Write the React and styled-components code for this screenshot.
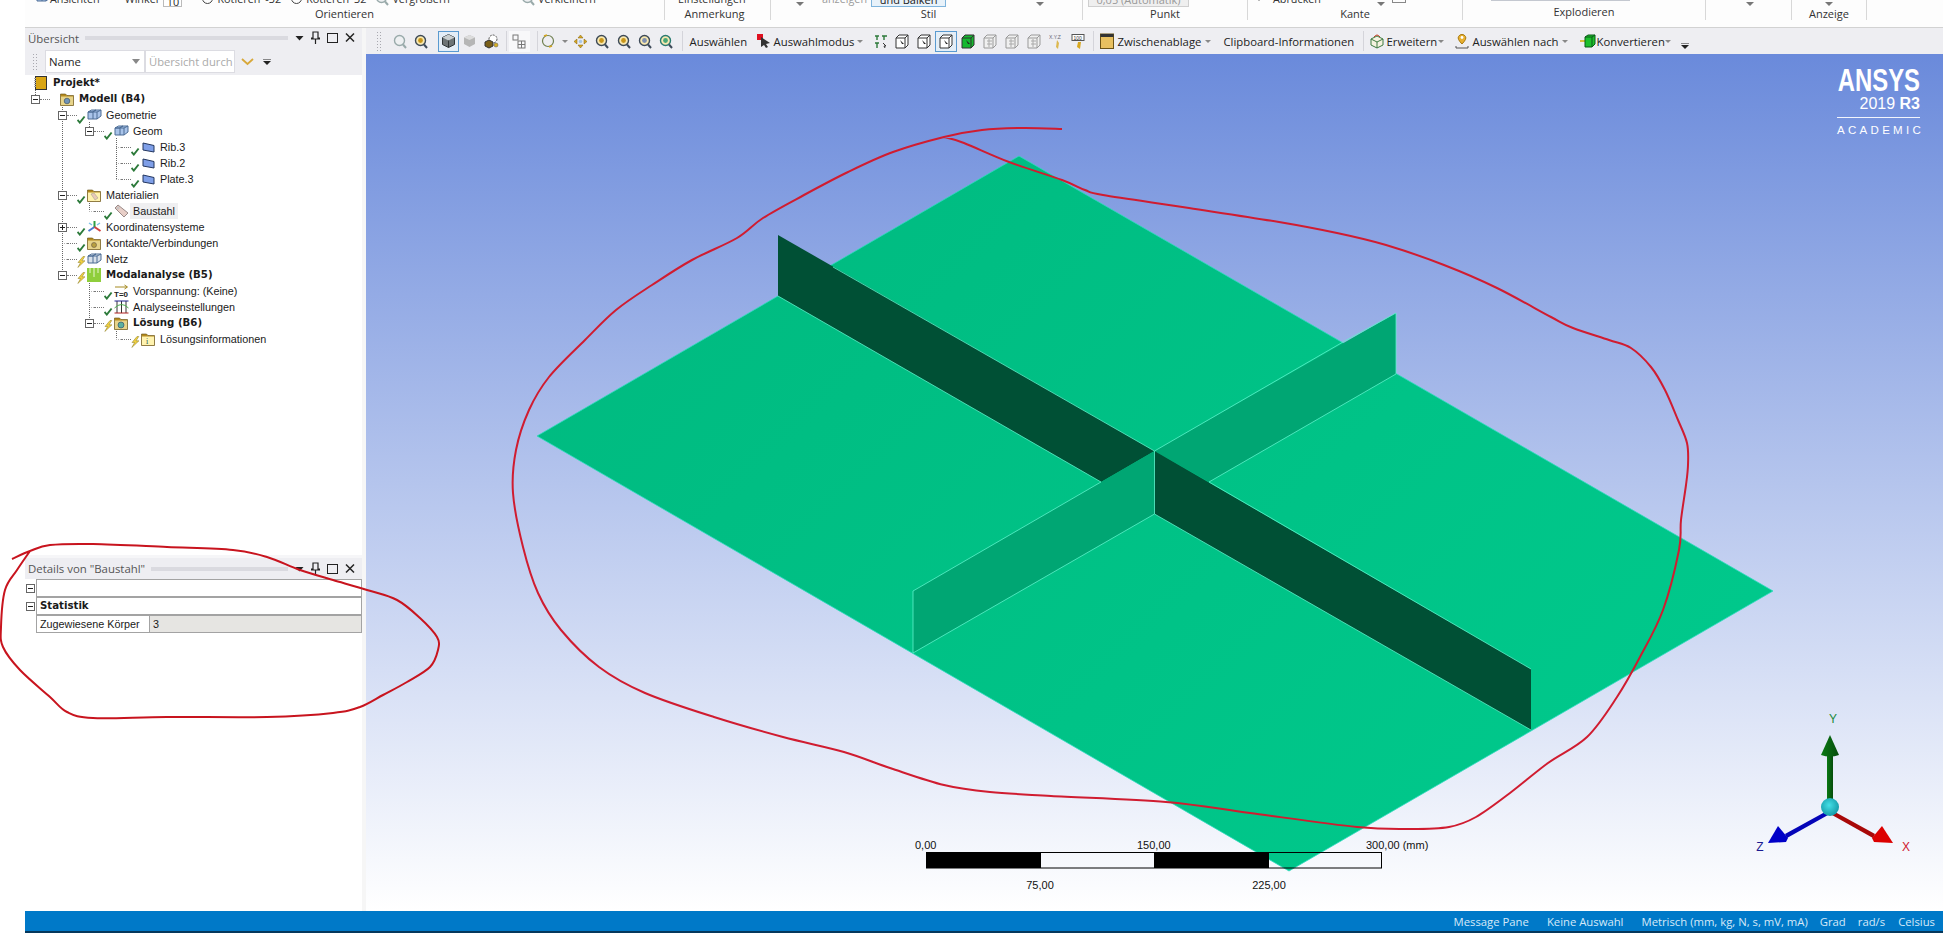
import React from "react";
import styled, { createGlobalStyle } from "styled-components";

const UI_FONT = `"Open Sans", "Noto Sans", "Liberation Sans", sans-serif`;
const TREE_FONT = `"Liberation Sans", Arial, sans-serif`;
const TREE_BOLD = `"DejaVu Sans", "Liberation Sans", sans-serif`;

const GlobalStyle = createGlobalStyle`
  html, body { margin: 0; padding: 0; background: #fff; }
  body { font-family: ${UI_FONT}; color: #1e1e1e; }
  * { box-sizing: border-box; }
`;

/* ---------- small drawings ---------- */

const Svg = ({ w = 14, h = 14, box, children }) => (
  <svg width={w} height={h} viewBox={box || `0 0 ${w} ${h}`} style={{ flex: "none", display: "block" }}>
    {children}
  </svg>
);

const Check = () => (
  <Svg w={9} h={10}>
    <path d="M0.5 6 L2.8 8.6 L7.6 2.5" fill="none" stroke="#2c7a3a" strokeWidth="1.9" />
  </Svg>
);

const Bolt = () => (
  <Svg w={9} h={12}>
    <path d="M6 0.5 L1 6.5 L3.6 6.5 L0.8 11.5 L8 4.8 L5 4.8 L7.8 0.5 Z" fill="#f0d040" stroke="#8a7a20" strokeWidth="0.5" />
  </Svg>
);

const TreeIcon = ({ kind }) => {
  switch (kind) {
    case "book":
      return (
        <Svg w={14} h={14}>
          <rect x="1.5" y="0.5" width="11" height="13" fill="#d9a514" stroke="#333" />
          <path d="M1 2 V12" stroke="#aaa" strokeWidth="2" strokeDasharray="1 1" />
        </Svg>
      );
    case "geom":
    case "mesh":
      return (
        <Svg w={15} h={12}>
          <path d="M1 3 L4.5 1 H9 L5.5 3 Z M5.5 3 L9 1 H14 V7 L10 10 H1 V3" fill={kind === "mesh" ? "#d8e0ea" : "#a9c4ea"} stroke="#4d6d95" />
          <path d="M6 3 V10 M1 3 H10 V10 M10 3 L14 1" fill="none" stroke="#4d6d95" />
        </Svg>
      );
    case "sheet":
      return (
        <Svg w={13} h={11}>
          <path d="M1 1 L12 3.5 V10 L1 8 Z" fill="#7f9fe8" stroke="#23365f" />
        </Svg>
      );
    case "tag":
      return (
        <Svg w={15} h={14}>
          <path d="M1 4 L4 1 L14 9 L10 13 Z" fill="#e8cfc8" stroke="#9a8a88" />
          <circle cx="4" cy="4" r="1" fill="#fff" stroke="#888" strokeWidth="0.5" />
        </Svg>
      );
    case "triad":
      return (
        <Svg w={15} h={14}>
          <path d="M7.5 7 V1" stroke="#2f9e44" strokeWidth="2" />
          <path d="M7.5 7 L1.5 11" stroke="#4c78d0" strokeWidth="2" />
          <path d="M7.5 7 L13.5 11" stroke="#d04040" strokeWidth="2" />
          <path d="M2 3 L5 5 M13 3 L10 5" stroke="#7cc0e8" strokeWidth="1.4" />
        </Svg>
      );
    case "modal":
      return (
        <Svg w={14} h={14}>
          <rect width="14" height="14" fill="#8fce3c" />
          <path d="M3 0 V5 M7 0 V9 M11 0 V5" stroke="#e8f5d0" />
        </Svg>
      );
    case "pretension":
      return (
        <Svg w={15} h={14}>
          <path d="M1 3 H13 M10.5 1 L13.5 3 L10.5 5" fill="none" stroke="#a58a20" />
          <text x="0" y="12.5" fontSize="8" fontWeight="700" fontFamily="Liberation Sans, sans-serif" fill="#222">T=0</text>
        </Svg>
      );
    case "settings":
      return (
        <Svg w={15} h={14}>
          <path d="M3 1 V13 M7.5 1 V13 M12 1 V13" stroke="#333" />
          <path d="M0.5 1 H14.5" stroke="#23238f" />
          <path d="M0.5 13 H14.5" stroke="#b02020" />
          <path d="M0.5 8 Q7.5 1 14.5 8" fill="none" stroke="#4caf50" />
        </Svg>
      );
    default: {
      /* folders: materials, contacts, solution, info, model */
      const fill = kind === "info" || kind === "materials" ? "#fff3b0" : "#e7d48a";
      return (
        <Svg w={14} h={14}>
          <path d="M0.5 13.5 V2 H5.5 L7 3.5 H13.5 V13.5 Z" fill="#b58b1e" stroke="#5f4a10" strokeWidth="0.6" />
          <rect x="1" y="4.5" width="12" height="8.5" fill={fill} />
          {kind === "info" && <text x="5" y="12" fontSize="8" fontFamily="Liberation Serif, serif" fill="#255">i</text>}
          {kind === "materials" && <path d="M4 6 L7 5 L11 10 L8 12 Z" fill="#e8c8b8" stroke="#998" strokeWidth="0.5" />}
          {kind === "model" && <circle cx="7" cy="9" r="2.8" fill="#6f93b8" stroke="#345" strokeWidth="0.6" />}
          {kind === "contacts" && <circle cx="7" cy="9" r="2.5" fill="#b8a040" stroke="#654" strokeWidth="0.6" />}
          {kind === "solution" && <circle cx="7" cy="9" r="3" fill="#5cb0a0" stroke="#246" strokeWidth="0.6" />}
        </Svg>
      );
    }
  }
};

const Magnifier = ({ tone }) => (
  <Svg w={14} h={15}>
    <circle cx="6.5" cy="6.5" r="5" fill={tone === "off" ? "#eef0f2" : "#f8e8b0"} stroke={tone === "off" ? "#9aa" : tone === "teal" ? "#2a7a70" : "#3d4a58"} strokeWidth="1.4" />
    <path d="M10 10.5 L13 14" stroke={tone === "off" ? "#9aa" : "#3d4a58"} strokeWidth="2" />
    {tone === "gold" && <circle cx="6.5" cy="6.5" r="2.4" fill="#c9961a" />}
    {tone === "teal" && <circle cx="6.5" cy="6.5" r="2.4" fill="#48a878" />}
    {tone === "navy" && <circle cx="6.5" cy="6.5" r="2.4" fill="#7f8fb0" />}
  </Svg>
);

const PickBox = ({ color = "#fff", dim }) => (
  <Svg w={14} h={15}>
    <path d="M1 4 L4 1 H13 V11 L10 14 H1 Z" fill={color} stroke={dim ? "#999" : "#333"} />
    <path d="M1 4 H10 V14 M10 4 L13 1" fill="none" stroke={dim ? "#999" : "#333"} />
    {!dim && <path d="M5 6 L9 10 L7 10 L8 12 Z" fill="#222" />}
    {dim && <path d="M4 7 H9 M4 10 H9 M6 5 V13" stroke="#aaa" />}
  </Svg>
);

const ToolDrawing = ({ kind }) => {
  switch (kind) {
    case "zoomOff": return <Magnifier tone="off" />;
    case "zoomGold": return <Magnifier tone="gold" />;
    case "zoomNavy": return <Magnifier tone="navy" />;
    case "zoomTeal": return <Magnifier tone="teal" />;
    case "cube":
      return (
        <Svg w={13} h={14}>
          <path d="M6.5 0.5 L12.5 3.5 V10.5 L6.5 13.5 L0.5 10.5 V3.5 Z" fill="#6c7476" stroke="#2f3638" />
          <path d="M0.5 3.5 L6.5 6.5 L12.5 3.5 L6.5 0.5 Z" fill="#c9cfd0" />
          <path d="M6.5 6.5 V13.5" stroke="#2f3638" />
        </Svg>
      );
    case "cubeLight":
      return (
        <Svg w={13} h={14}>
          <path d="M6.5 1 L12 3.5 V10 L6.5 13 L1 10 V3.5 Z" fill="#b6b6b6" />
          <path d="M1 3.5 L6.5 6 L12 3.5 L6.5 1 Z" fill="#dcdcdc" />
        </Svg>
      );
    case "cubes":
      return (
        <Svg w={15} h={15}>
          <circle cx="9" cy="5" r="4" fill="#fff" stroke="#555" strokeDasharray="2 1" />
          <path d="M1 8 L5 6 L9 8 V12 L5 14 L1 12 Z" fill="#7a5f18" stroke="#333" />
          <circle cx="12" cy="11" r="2" fill="#d8b020" stroke="#555" strokeWidth="0.5" />
        </Svg>
      );
    case "hatch":
      return (
        <Svg w={14} h={15}>
          <rect x="1" y="1" width="5" height="5" fill="none" stroke="#777" />
          <rect x="6" y="7" width="7" height="7" fill="none" stroke="#777" />
          <path d="M9.5 7 V14 M6 10.5 H13" stroke="#777" />
        </Svg>
      );
    case "rotate":
      return (
        <Svg w={14} h={14}>
          <circle cx="7" cy="7" r="5.5" fill="none" stroke="#6f7f50" strokeWidth="1.2" />
          <path d="M3 2 L6 1 M11 12 L8 13" stroke="#d5a520" strokeWidth="1.6" />
        </Svg>
      );
    case "pan":
      return (
        <Svg w={15} h={15}>
          <path d="M7.5 1 L10 4 H5 Z M7.5 14 L10 11 H5 Z M1 7.5 L4 5 V10 Z M14 7.5 L11 5 V10 Z" fill="#d8a820" stroke="#806010" strokeWidth="0.5" />
          <circle cx="7.5" cy="7.5" r="1.8" fill="#a8c8e8" />
        </Svg>
      );
    case "pickRed":
      return (
        <Svg w={14} h={14}>
          <rect x="0" y="0" width="6" height="6" fill="#e01020" />
          <path d="M4 3 L13 9 L9 10 L11 13 L9 14 L7 11 L4 13 Z" fill="#333" />
        </Svg>
      );
    case "grid":
      return (
        <Svg w={14} h={15}>
          <path d="M1 2 H5 M3 2 V6 M8 2 H13 M10 2 V6 M1 9 H5 M3 9 V14" stroke="#2d7a3a" strokeWidth="1.4" />
          <path d="M9 9 L12 12 L10 12 L11 14" fill="none" stroke="#333" />
        </Svg>
      );
    case "pick": return <PickBox />;
    case "pickGreen": return <PickBox color="#14b82e" />;
    case "pickDim": return <PickBox color="#f0f0f0" dim />;
    case "xyz":
      return (
        <Svg w={14} h={15}>
          <text x="0" y="5" fontSize="5" fill="#667" fontFamily="Liberation Sans, sans-serif">X.Y.Z</text>
          <path d="M8 6 L7 13 L9 15 L10 9 Z" fill="#dcb850" />
        </Svg>
      );
    case "label":
      return (
        <Svg w={14} h={15}>
          <rect x="1" y="0.5" width="12" height="6" fill="#fff" stroke="#555" />
          <text x="2.5" y="5.5" fontSize="5" fill="#333" fontFamily="Liberation Sans, sans-serif">100</text>
          <path d="M7 8 L6 13 L9 15 L10 8 Z" fill="#d8a820" />
        </Svg>
      );
    case "clip":
      return (
        <Svg w={14} h={16}>
          <rect x="0.5" y="1" width="13" height="14.5" fill="#e8c060" stroke="#6a5216" />
          <rect x="0.5" y="1" width="13" height="3" fill="#333" />
        </Svg>
      );
    case "extend":
      return (
        <Svg w={14} h={15}>
          <path d="M7 2 L13 5 V11 L7 14 L1 11 V5 Z" fill="#f5f2e0" stroke="#3d7a40" />
          <path d="M1 5 L7 8 L13 5 M7 8 V14" fill="none" stroke="#3d7a40" />
          <path d="M4 3 Q7 -1 10 3" fill="none" stroke="#c83a20" />
        </Svg>
      );
    case "pin":
      return (
        <Svg w={14} h={16}>
          <path d="M7 11 Q2 6 3.5 3.5 A4 4 0 0 1 10.5 3.5 Q12 6 7 11 Z" fill="#e8b030" stroke="#a87a10" />
          <circle cx="7" cy="4.5" r="1.4" fill="#fff" />
          <path d="M1 15 H13 M1 13 V15 M13 13 V15" stroke="#555" />
        </Svg>
      );
    case "convert":
      return (
        <Svg w={16} h={14}>
          <path d="M0 7 H5" stroke="#d8c040" strokeWidth="2" />
          <path d="M5 3 L8 1 H15 V10 L12 13 H5 Z" fill="#1cc02c" stroke="#0a5a18" />
          <path d="M5 3 H12 V13 M12 3 L15 1" fill="none" stroke="#0a5a18" />
        </Svg>
      );
    default:
      return null;
  }
};

/* ---------- ribbon ---------- */

const Ribbon = styled.header`
  height: 28px;
  flex: none;
  display: flex;
  overflow: hidden;
  background: #fdfdfd;
  border-bottom: 1px solid #d2d2d2;
`;

const RibbonGroup = styled.div`
  width: ${(p) => p.$w}px;
  height: 20px;
  flex: none;
  display: flex;
  flex-direction: column;
  border-right: 1px solid #d8d8d8;
`;

const RibbonTop = styled.div`
  height: 6px;
  display: flex;
  align-items: flex-start;
  padding-left: ${(p) => p.$pad || 0}px;
`;

const RibbonLabel = styled.div`
  height: 16px;
  line-height: 16px;
  font-size: 11px;
  color: #333;
  text-align: center;
  padding-right: ${(p) => p.$shift || 0}px;
  padding-left: ${(p) => p.$push || 0}px;
`;

const RibbonText = styled.span`
  flex: none;
  line-height: 16px;
  font-size: 10.8px;
  margin-top: -9px;
  margin-left: ${(p) => p.$ml || 0}px;
  color: ${(p) => (p.$dim ? "#9a9a9a" : "#333")};
  white-space: nowrap;
`;

const RibbonIcon = styled.span`
  flex: none;
  margin-top: -9px;
  margin-left: ${(p) => p.$ml || 0}px;
  margin-right: ${(p) => p.$mr ?? 3}px;
  display: block;
`;

const SpinBox = styled.span`
  flex: none;
  width: 19px;
  height: 17px;
  margin-top: -10px;
  margin-left: ${(p) => p.$ml || 0}px;
  border: 1px solid #bbb;
  background: #fff;
  font-size: 10.8px;
  line-height: 16px;
  text-align: center;
  padding-top: 3px;
`;

const StyleBox = styled.span`
  flex: none;
  width: ${(p) => p.$w}px;
  height: 16px;
  margin-top: -9px;
  margin-left: ${(p) => p.$ml || 0}px;
  border: 1px solid ${(p) => p.$line};
  background: ${(p) => p.$bg};
  color: ${(p) => p.$color};
  font-size: 11px;
  line-height: 14px;
  padding-top: 1px;
  text-align: center;
  white-space: nowrap;
  overflow: hidden;
`;

const DropTick = styled.span`
  flex: none;
  width: 0;
  height: 0;
  margin-left: ${(p) => p.$ml || 0}px;
  margin-top: 2px;
  border-left: 4px solid transparent;
  border-right: 4px solid transparent;
  border-top: 4px solid #777;
`;

const RadioDot = styled.span`
  flex: none;
  width: 11px;
  height: 11px;
  margin-top: -7px;
  margin-left: ${(p) => p.$ml || 0}px;
  margin-right: 4px;
  border: 1px solid #444;
  border-radius: 50%;
`;

const ExplodeBar = styled.span`
  width: 139px;
  height: 1px;
  margin-left: 28px;
  background: #c4c8d0;
`;

const SmallSquare = styled.span`
  width: 14px;
  height: 3px;
  margin-left: 7px;
  border: 1px solid #888;
  border-top: 0;
`;

const RibbonBar = () => (
  <Ribbon>
    <RibbonGroup $w={640}>
      <RibbonTop $pad={11}>
        <RibbonIcon $mr={-1}><TreeIcon kind="geom" /></RibbonIcon>
        <RibbonText>Ansichten</RibbonText>
        <RibbonText $ml={25}>Winkel</RibbonText>
        <SpinBox $ml={5}>10</SpinBox>
        <RadioDot $ml={20} />
        <RibbonText>Rotieren</RibbonText>
        <RibbonText $ml={5}>-32</RibbonText>
        <RadioDot $ml={10} />
        <RibbonText>Rotieren</RibbonText>
        <RibbonText $ml={5}>32</RibbonText>
        <RibbonIcon $ml={9}><Magnifier tone="off" /></RibbonIcon>
        <RibbonText>Vergrößern</RibbonText>
        <RibbonIcon $ml={71}><Magnifier tone="off" /></RibbonIcon>
        <RibbonText>Verkleinern</RibbonText>
      </RibbonTop>
      <RibbonLabel $shift={-2}>Orientieren</RibbonLabel>
    </RibbonGroup>
    <RibbonGroup $w={106}>
      <RibbonTop $pad={13}>
        <RibbonText>Einstellungen</RibbonText>
      </RibbonTop>
      <RibbonLabel $shift={6}>Anmerkung</RibbonLabel>
    </RibbonGroup>
    <RibbonGroup $w={312}>
      <RibbonTop $pad={25}>
        <DropTick />
        <RibbonText $dim $ml={18}>anzeigen</RibbonText>
        <StyleBox $ml={4} $w={75} $line="#7fb4dc" $bg="#e8f2fa" $color="#222">und Balken</StyleBox>
        <DropTick $ml={90} />
      </RibbonTop>
      <RibbonLabel $push={4}>Stil</RibbonLabel>
    </RibbonGroup>
    <RibbonGroup $w={165}>
      <RibbonTop $pad={5}>
        <StyleBox $w={101} $line="#cfcfcf" $bg="#efefef" $color="#999">0,05 (Automatik)</StyleBox>
      </RibbonTop>
      <RibbonLabel>Punkt</RibbonLabel>
    </RibbonGroup>
    <RibbonGroup $w={215}>
      <RibbonTop $pad={10}>
        <RibbonIcon><Svg w={12} h={10}><path d="M1 0 V10" stroke="#777" /><path d="M5 0 H11 V8 H5 Z" fill="#3fb43f" /></Svg></RibbonIcon>
        <RibbonText>Abrücken</RibbonText>
        <DropTick $ml={56} />
        <SmallSquare />
      </RibbonTop>
      <RibbonLabel>Kante</RibbonLabel>
    </RibbonGroup>
    <RibbonGroup $w={243}>
      <RibbonTop>
        <ExplodeBar />
      </RibbonTop>
      <RibbonLabel>Explodieren</RibbonLabel>
    </RibbonGroup>
    <RibbonGroup $w={86}>
      <RibbonTop $pad={40}>
        <DropTick />
      </RibbonTop>
    </RibbonGroup>
    <RibbonGroup $w={75}>
      <RibbonTop $pad={33}>
        <DropTick />
      </RibbonTop>
      <RibbonLabel>Anzeige</RibbonLabel>
    </RibbonGroup>
  </Ribbon>
);

/* ---------- dock title bar ---------- */

const PanelTitle = styled.div`
  height: ${(p) => p.$h}px;
  flex: none;
  display: flex;
  align-items: center;
  padding: 0 7px 0 3px;
  background: #eeeef2;
  font-size: 11.4px;
  color: #555;
  white-space: nowrap;
  border-top: ${(p) => (p.$top ? "3px solid #f6f6f8" : "0")};
`;

const Grip = styled.span`
  flex: 1;
  height: 4px;
  margin: 0 7px 0 6px;
  background-image: radial-gradient(#c2c2ca 0.6px, transparent 0.8px);
  background-size: 2px 2px;
`;

const TitleButtons = styled.span`
  display: flex;
  align-items: center;
  gap: 7px;
`;

const PaneButtons = () => (
  <TitleButtons>
    <Svg w={9} h={14}><path d="M0.5 5 H8.5 L4.5 9.5 Z" fill="#222" /></Svg>
    <Svg w={9} h={14}><path d="M2 1 H7 V7 H8.5 V8 H0.5 V7 H2 Z M4.5 8 V13" fill="none" stroke="#222" strokeWidth="1.2" /></Svg>
    <Svg w={11} h={14}><rect x="0.5" y="2.5" width="10" height="9" fill="none" stroke="#222" strokeWidth="1" /></Svg>
    <Svg w={10} h={14}><path d="M1 2.5 L9 10.5 M9 2.5 L1 10.5" stroke="#222" strokeWidth="1.5" /></Svg>
  </TitleButtons>
);

/* ---------- outline tree ---------- */

const LeftDock = styled.aside`
  width: 341px;
  flex: none;
  display: flex;
  flex-direction: column;
  background: #fff;
  border-right: 4px solid #f6f6f6;
`;

const OutlinePanel = styled.section`
  flex: 1;
  display: flex;
  flex-direction: column;
  min-height: 0;
`;

const SearchRow = styled.div`
  height: 27px;
  flex: none;
  display: flex;
  align-items: center;
  background: #eeeef2;
  padding-left: 7px;
`;

const RowGrip = styled.span`
  width: 6px;
  height: 17px;
  margin-right: 7px;
  background-image: radial-gradient(#a9a9b0 0.7px, transparent 0.9px);
  background-size: 3px 3px;
`;

const NameSelect = styled.div`
  width: 100px;
  height: 23px;
  display: flex;
  align-items: center;
  justify-content: space-between;
  padding: 0 4px 0 3px;
  background: #fff;
  border: 1px solid #dcdce2;
  font-size: 11.4px;
`;

const SearchBox = styled.div`
  width: 90px;
  height: 23px;
  padding-left: 3px;
  background: #fff;
  border: 1px solid #dcdce2;
  font-size: 11.2px;
  line-height: 21px;
  color: #aaa;
  white-space: nowrap;
  overflow: hidden;
`;

const SearchTools = styled.span`
  display: flex;
  align-items: center;
  gap: 9px;
  margin-left: 6px;
`;

const Tree = styled.div`
  position: relative;
  flex: 1;
`;

const GuideLayer = styled.svg`
  position: absolute;
  left: 0;
  top: 0;
  pointer-events: none;
`;

const TreeRow = styled.div`
  height: 16px;
  display: flex;
  align-items: center;
  margin-left: -1px;
  padding-left: ${(p) => Math.max(p.$level * 27 - 20, 0)}px;
`;

const Expander = styled.span`
  position: relative;
  z-index: 1;
  width: 9px;
  height: 9px;
  flex: none;
  background: #fff;
  border: 1px solid #666;
  &::before {
    content: "";
    position: absolute;
    left: 1px;
    right: 1px;
    top: 3px;
    border-top: 1px solid #222;
  }
  ${(p) => p.$closed && `
    &::after {
      content: "";
      position: absolute;
      top: 1px;
      bottom: 1px;
      left: 3px;
      border-left: 1px solid #222;
    }
  `}
`;

const NoExpander = styled.span`
  width: 9px;
  height: 1px;
  flex: none;
  border-top: 1px dotted #777;
  clip-path: inset(0 0 0 4px);
`;

const Dots = styled.span`
  width: 10px;
  flex: none;
  border-top: 1px dotted #777;
`;

const StatusSlot = styled.span`
  width: 9px;
  height: 16px;
  flex: none;
  display: flex;
  align-items: flex-end;
  margin-top: 2px;
`;

const IconSlot = styled.span`
  width: 16px;
  flex: none;
  display: flex;
  justify-content: center;
`;

const TreeLabel = styled.span`
  margin-left: 4px;
  font-family: ${(p) => (p.$bold ? TREE_BOLD : TREE_FONT)};
  font-size: ${(p) => (p.$bold ? 10.2 : 10.8)}px;
  line-height: 16px;
  font-weight: ${(p) => (p.$bold ? 700 : 400)};
  color: #1a1a1a;
  white-space: nowrap;
  ${(p) => p.$selected && `background: #efeff1; padding: 0 3px; margin-left: 1px;`}
`;

const TREE = [
  { level: 0, label: "Projekt*", icon: "book", bold: true },
  { level: 1, label: "Modell (B4)", icon: "model", bold: true, open: true },
  { level: 2, label: "Geometrie", icon: "geom", status: "ok", open: true },
  { level: 3, label: "Geom", icon: "geom", status: "ok", open: true },
  { level: 4, label: "Rib.3", icon: "sheet", status: "ok" },
  { level: 4, label: "Rib.2", icon: "sheet", status: "ok" },
  { level: 4, label: "Plate.3", icon: "sheet", status: "ok" },
  { level: 2, label: "Materialien", icon: "materials", status: "ok", open: true },
  { level: 3, label: "Baustahl", icon: "tag", status: "ok", selected: true },
  { level: 2, label: "Koordinatensysteme", icon: "triad", status: "ok", closed: true },
  { level: 2, label: "Kontakte/Verbindungen", icon: "contacts", status: "ok" },
  { level: 2, label: "Netz", icon: "mesh", status: "bolt" },
  { level: 2, label: "Modalanalyse (B5)", icon: "modal", status: "bolt", bold: true, open: true },
  { level: 3, label: "Vorspannung: (Keine)", icon: "pretension", status: "ok" },
  { level: 3, label: "Analyseeinstellungen", icon: "settings", status: "ok" },
  { level: 3, label: "Lösung (B6)", icon: "solution", status: "bolt", bold: true, open: true },
  { level: 4, label: "Lösungsinformationen", icon: "info", status: "bolt" },
];

/* vertical dotted guides of the tree, in panel coordinates */
const GUIDES = [
  [10, 15, 20],
  [37, 32, 196],
  [64, 47, 52],
  [64, 128, 136],
  [64, 208, 244],
  [91, 63, 104],
  [91, 256, 264],
];

const OutlineTree = () => (
  <Tree>
    <GuideLayer width="337" height="300">
      {GUIDES.map(([x, a, b]) => (
        <line key={`${x}-${a}`} x1={x + 0.5} x2={x + 0.5} y1={a} y2={b} stroke="#666" strokeDasharray="1 1" />
      ))}
    </GuideLayer>
    {TREE.map((row) => (
      <TreeRow key={row.label} $level={row.level}>
        {row.level > 0 && (row.open || row.closed ? <Expander $closed={row.closed} /> : <NoExpander />)}
        {row.level > 0 && <Dots />}
        <StatusSlot>{row.status === "ok" ? <Check /> : row.status === "bolt" ? <Bolt /> : null}</StatusSlot>
        <IconSlot><TreeIcon kind={row.icon} /></IconSlot>
        <TreeLabel $bold={row.bold} $selected={row.selected}>{row.label}</TreeLabel>
      </TreeRow>
    ))}
  </Tree>
);

/* ---------- details ---------- */

const DetailsPanel = styled.section`
  height: 356px;
  flex: none;
  display: flex;
  flex-direction: column;
`;

const DetailsRow = styled.div`
  height: 18px;
  display: flex;
  align-items: center;
`;

const DetailsGutter = styled.span`
  width: 11px;
  flex: none;
  display: flex;
  justify-content: flex-start;
  padding-left: 1px;
`;

const DetailsCells = styled.div`
  flex: 1;
  height: 18px;
  margin-top: ${(p) => (p.$first ? 0 : -1)}px;
  display: flex;
  border: 1px solid #a3a3a3;
  font-family: ${TREE_FONT};
  font-size: 10.8px;
  line-height: 16px;
  background: ${(p) => p.$bg || "#fff"};
  color: #1a1a1a;
`;

const HeadCell = styled.span`
  padding-left: 3px;
  font-family: ${TREE_BOLD};
  font-size: 10.2px;
  font-weight: 700;
`;

const NameCell = styled.span`
  width: 113px;
  flex: none;
  padding-left: 3px;
  background: #fff;
  border-right: 1px solid #a3a3a3;
  white-space: nowrap;
  overflow: hidden;
`;

const ValueCell = styled.span`
  padding-left: 3px;
`;

/* ---------- viewport toolbar ---------- */

const Workspace = styled.main`
  flex: 1;
  min-width: 0;
  display: flex;
  flex-direction: column;
`;

const GraphicsToolbar = styled.div`
  height: 26px;
  flex: none;
  display: flex;
  align-items: center;
  padding-left: 10px;
  background: #eeeef2;
  font-size: 11.3px;
  color: #222;
  white-space: nowrap;
`;

const BarGrip = styled.span`
  width: 6px;
  height: 20px;
  margin-right: 7px;
  background-image: radial-gradient(#a9a9b0 0.7px, transparent 0.9px);
  background-size: 3px 3px;
`;

const ToolButton = styled.span`
  width: ${(p) => p.$w || 21.4}px;
  height: 21px;
  flex: none;
  display: flex;
  align-items: center;
  justify-content: center;
  margin-left: ${(p) => p.$ml || 0}px;
  border: 1px solid ${(p) => (p.$active ? "#5a9ad0" : "transparent")};
  background: ${(p) => (p.$active ? "#e4eef7" : p.$soft ? "#f8f8fa" : "transparent")};
`;

const BarSep = styled.span`
  width: 1px;
  height: 20px;
  flex: none;
  margin-left: ${(p) => p.$ml}px;
  margin-right: ${(p) => p.$mr}px;
  background: #d4d4da;
`;

const BarIcon = styled.span`
  flex: none;
  margin-left: ${(p) => p.$ml || 0}px;
  display: block;
`;

const BarText = styled.span`
  flex: none;
  width: ${(p) => p.$w}px;
  margin-left: ${(p) => p.$ml || 0}px;
`;

const BarCaret = styled.span`
  flex: none;
  width: 0;
  height: 0;
  margin-left: ${(p) => p.$ml || 2}px;
  margin-right: ${(p) => p.$mr || 0}px;
  border-left: 3px solid transparent;
  border-right: 3px solid transparent;
  border-top: 3px solid #888;
`;

const Overflow = styled.span`
  flex: none;
  margin-left: 10px;
  margin-top: 9px;
  display: block;
`;

const TopToolbar = () => (
  <GraphicsToolbar>
    <BarGrip />
    <ToolButton><ToolDrawing kind="zoomOff" /></ToolButton>
    <ToolButton><ToolDrawing kind="zoomGold" /></ToolButton>
    <ToolButton $ml={6} $active><ToolDrawing kind="cube" /></ToolButton>
    <ToolButton><ToolDrawing kind="cubeLight" /></ToolButton>
    <ToolButton><ToolDrawing kind="cubes" /></ToolButton>
    <BarSep $ml={4} $mr={1.8} />
    <ToolButton $soft><ToolDrawing kind="hatch" /></ToolButton>
    <BarSep $ml={7} $mr={2} />
    <ToolButton $w={16}><ToolDrawing kind="rotate" /></ToolButton>
    <BarCaret $ml={6} />
    <ToolButton $ml={2}><ToolDrawing kind="pan" /></ToolButton>
    <ToolButton><ToolDrawing kind="zoomGold" /></ToolButton>
    <ToolButton><ToolDrawing kind="zoomGold" /></ToolButton>
    <ToolButton><ToolDrawing kind="zoomNavy" /></ToolButton>
    <ToolButton><ToolDrawing kind="zoomTeal" /></ToolButton>
    <BarSep $ml={4.5} $mr={7} />
    <BarText $w={58}>Auswählen</BarText>
    <BarIcon $ml={9}><ToolDrawing kind="pickRed" /></BarIcon>
    <BarText $w={81} $ml={3}>Auswahlmodus</BarText>
    <BarCaret />
    <ToolButton $w={21.9} $ml={7}><ToolDrawing kind="grid" /></ToolButton>
    <ToolButton $w={21.9}><ToolDrawing kind="pick" /></ToolButton>
    <ToolButton $w={21.9}><ToolDrawing kind="pick" /></ToolButton>
    <ToolButton $w={21.9} $active><ToolDrawing kind="pick" /></ToolButton>
    <ToolButton $w={21.9}><ToolDrawing kind="pickGreen" /></ToolButton>
    <ToolButton $w={21.9}><ToolDrawing kind="pickDim" /></ToolButton>
    <ToolButton $w={21.9}><ToolDrawing kind="pickDim" /></ToolButton>
    <ToolButton $w={21.9}><ToolDrawing kind="pickDim" /></ToolButton>
    <ToolButton $w={21.9}><ToolDrawing kind="xyz" /></ToolButton>
    <ToolButton $w={21.9}><ToolDrawing kind="label" /></ToolButton>
    <BarSep $ml={4} $mr={6} />
    <BarIcon><ToolDrawing kind="clip" /></BarIcon>
    <BarText $w={85} $ml={4}>Zwischenablage</BarText>
    <BarCaret />
    <BarText $w={131} $ml={13}>Clipboard-Informationen</BarText>
    <BarSep $ml={8} $mr={6} />
    <BarIcon><ToolDrawing kind="extend" /></BarIcon>
    <BarText $w={48} $ml={3}>Erweitern</BarText>
    <BarCaret $ml={3} />
    <BarIcon $ml={11}><ToolDrawing kind="pin" /></BarIcon>
    <BarText $w={87} $ml={4}>Auswählen nach</BarText>
    <BarCaret />
    <BarIcon $ml={12}><ToolDrawing kind="convert" /></BarIcon>
    <BarText $w={66} $ml={1}>Konvertieren</BarText>
    <BarCaret />
    <Overflow>
      <Svg w={8} h={6}><path d="M0 0 H8" stroke="#222" /><path d="M0 2 H8 L4 6 Z" fill="#222" /></Svg>
    </Overflow>
  </GraphicsToolbar>
);

/* ---------- graphics viewport ---------- */

const Viewport = styled.div`
  position: relative;
  flex: 1;
  min-height: 0;
  overflow: hidden;
  background: linear-gradient(#6a8adb, #ffffff);
`;

const Scene = styled.svg`
  position: absolute;
  left: 0;
  top: 0;
  display: block;
`;

const Logo = styled.div`
  position: absolute;
  right: 23px;
  top: 15px;
  width: 83px;
  color: #fff;
  text-align: right;
  font-family: "Liberation Sans", sans-serif;
`;

const LogoName = styled.div`
  display: flex;
  justify-content: flex-end;
  font-size: 31px;
  line-height: 24px;
  font-weight: 700;
  transform: scaleX(0.77);
  transform-origin: right center;
  white-space: nowrap;
`;

const LogoRelease = styled.div`
  font-size: 16px;
  line-height: 20px;
  font-weight: 400;
  margin-top: 1px;
  b { font-weight: 700; }
`;

const LogoEdition = styled.div`
  margin-top: 3px;
  padding-top: 6px;
  border-top: 1px solid #f2f5fd;
  font-size: 11.5px;
  line-height: 12px;
  letter-spacing: 3.3px;
  white-space: nowrap;
`;

const labelFont = { fontFamily: "Liberation Sans, sans-serif", fontSize: 11 };

const GraphicsScene = () => (
  <Scene width="1577" height="857" viewBox="366 54 1577 857">
    <defs>
      <linearGradient id="plate" x1="0" y1="0" x2="1" y2="0.6">
        <stop offset="0" stopColor="#00b97f" />
        <stop offset="1" stopColor="#00c88b" />
      </linearGradient>
      <linearGradient id="arrowY" x1="0" x2="1">
        <stop offset="0" stopColor="#0a7a14" /><stop offset="1" stopColor="#064c0c" />
      </linearGradient>
      <radialGradient id="ball" cx="0.45" cy="0.4" r="0.6">
        <stop offset="0" stopColor="#45dfe6" /><stop offset="1" stopColor="#149aa8" />
      </radialGradient>
    </defs>

    <polygon points="1019,156 1773,591 1289,871 537,436" fill="url(#plate)" stroke="#2fdcc0" strokeWidth="0.8" />
    <polygon points="778,235 1154.5,451 1101,482 778,296" fill="#005035" />
    <polygon points="1396,313 1396,374 1209,482 1154.5,451" fill="#00a673" />
    <polygon points="1154.5,451 1154.5,514 913,653 913,591" fill="#00a673" />
    <polygon points="1154.5,451 1531,669 1531,730 1154.5,514" fill="#005035" />
    <g stroke="#5df2cc" strokeWidth="0.8" fill="none">
      <path d="M778 296 L1101 482 M833 267 L1154.5 451" />
      <path d="M1154.5 451 L1343 342 L1396 313 V374 L1209 482" />
      <path d="M1154.5 451 V514 L913 653 V591 L1101 482" />
      <path d="M1154.5 514 L1531 730 M1209 482 L1531 669" />
    </g>

    <g>
      <rect x="926" y="852" width="115" height="16" fill="#000" />
      <rect x="1154" y="852" width="115" height="16" fill="#000" />
      <rect x="926.5" y="852.5" width="455" height="15.5" fill="none" stroke="#000" />
      <g {...labelFont} fill="#111">
        <text x="915" y="849">0,00</text>
        <text x="1137" y="849">150,00</text>
        <text x="1366" y="849">300,00 (mm)</text>
        <text x="1040" y="889" textAnchor="middle">75,00</text>
        <text x="1269" y="889" textAnchor="middle">225,00</text>
      </g>
    </g>

    <g>
      <rect x="1827" y="752" width="6" height="50" fill="url(#arrowY)" />
      <path d="M1830 735 L1839 755 Q1830 758 1821 755 Z" fill="url(#arrowY)" />
      <path d="M1825 812 L1785 834 L1787 838 L1828 815 Z" fill="#0404b8" />
      <path d="M1768 843 L1778 826 L1788 838 L1786 842 Z" fill="#0000c8" />
      <path d="M1835 812 L1875 834 L1873 838 L1832 815 Z" fill="#a80808" />
      <path d="M1893 843 L1882 826 L1872 838 L1874 842 Z" fill="#dc0000" />
      <circle cx="1830" cy="807" r="9" fill="url(#ball)" />
      <text x="1833" y="723" textAnchor="middle" {...labelFont} fontSize="12" fill="#1a8a3a">Y</text>
      <text x="1760" y="851" textAnchor="middle" {...labelFont} fontSize="12" fill="#1a1a90">Z</text>
      <text x="1906" y="851" textAnchor="middle" {...labelFont} fontSize="12" fill="#d02030">X</text>
    </g>
  </Scene>
);

/* ---------- status bar ---------- */

const StatusBar = styled.footer`
  height: 22px;
  flex: none;
  display: flex;
  justify-content: flex-end;
  align-items: center;
  padding-right: 8px;
  background: #0079c8;
  border-bottom: 2px solid #06385c;
  font-size: 11.3px;
  color: #d6e9f8;
  white-space: nowrap;
`;

const StatusItem = styled.span`
  margin-left: ${(p) => p.$ml}px;
`;

/* ---------- pen marks over the picture ---------- */

const Page = styled.div`
  position: relative;
  width: 1943px;
  height: 933px;
  overflow: hidden;
  display: flex;
  flex-direction: column;
  padding-left: 25px;
  background: #fff;
`;

const Main = styled.div`
  flex: 1;
  min-height: 0;
  display: flex;
`;

const PenLayer = styled.svg`
  position: absolute;
  left: 0;
  top: 0;
  pointer-events: none;
`;

const smooth = (pts) => {
  let d = `M${pts[0][0]} ${pts[0][1]}`;
  for (let i = 0; i < pts.length - 1; i++) {
    const p0 = pts[Math.max(i - 1, 0)];
    const p1 = pts[i];
    const p2 = pts[i + 1];
    const p3 = pts[Math.min(i + 2, pts.length - 1)];
    const c1x = p1[0] + (p2[0] - p0[0]) / 6;
    const c1y = p1[1] + (p2[1] - p0[1]) / 6;
    const c2x = p2[0] - (p3[0] - p1[0]) / 6;
    const c2y = p2[1] - (p3[1] - p1[1]) / 6;
    d += ` C${c1x.toFixed(1)} ${c1y.toFixed(1)} ${c2x.toFixed(1)} ${c2y.toFixed(1)} ${p2[0]} ${p2[1]}`;
  }
  return d;
};

const LOOP_MODEL = [
  [1062, 129], [1022, 128], [982, 130], [944, 137], [893, 152], [848, 172], [804, 195], [763, 218], [737, 238],
  [692, 260], [652, 285], [616, 310], [585, 340], [549, 377], [529, 410], [516, 450], [513, 493], [523, 547],
  [538, 593], [561, 630], [599, 667], [645, 693], [714, 717], [783, 737], [844, 752], [890, 768], [944, 785],
  [990, 792], [1051, 796], [1166, 802], [1250, 813], [1357, 827], [1411, 829], [1449, 827], [1476, 817],
  [1510, 793], [1548, 763], [1587, 737], [1617, 697], [1640, 657], [1663, 610], [1679, 550], [1681, 520],
  [1686, 485], [1688, 465], [1687, 443], [1678, 420], [1665, 390], [1651, 367], [1631, 348], [1609, 340],
  [1573, 328], [1551, 317], [1497, 288], [1444, 265], [1386, 245], [1337, 233], [1279, 222], [1189, 208],
  [1103, 195], [1085, 190], [1062, 180], [1009, 162], [964, 143], [944, 137],
];

const LOOP_DETAILS = [
  [12, 559], [30, 551], [50, 545], [93, 544], [167, 547], [233, 550], [267, 557], [300, 570], [333, 580],
  [367, 590], [397, 600], [420, 618], [437, 637], [438, 650], [430, 667], [407, 682], [383, 695], [360, 707],
  [333, 713], [267, 717], [167, 717], [93, 718], [67, 712], [50, 697], [20, 670], [3, 647], [1, 627], [5, 590],
  [17, 570], [30, 551],
];

export default function App() {
  return (
    <Page>
      <GlobalStyle />
      <RibbonBar />
      <Main>
        <LeftDock>
          <OutlinePanel>
            <PanelTitle $h={20}>
              Übersicht
              <Grip />
              <PaneButtons />
            </PanelTitle>
            <SearchRow>
              <RowGrip />
              <NameSelect>
                Name
                <Svg w={8} h={5}><path d="M0 0 H8 L4 5 Z" fill="#888" /></Svg>
              </NameSelect>
              <SearchBox>Übersicht durch</SearchBox>
              <SearchTools>
                <Svg w={13} h={8}><path d="M1 1 L6.5 6 L12 1" fill="none" stroke="#d8a83a" strokeWidth="1.8" /></Svg>
                <Svg w={8} h={6}><path d="M0 0 H8" stroke="#222" /><path d="M0 2 H8 L4 6 Z" fill="#222" /></Svg>
              </SearchTools>
            </SearchRow>
            <OutlineTree />
          </OutlinePanel>
          <DetailsPanel>
            <PanelTitle $h={24} $top>
              Details von "Baustahl"
              <Grip />
              <PaneButtons />
            </PanelTitle>
            <DetailsRow>
              <DetailsGutter><Expander /></DetailsGutter>
              <DetailsCells $first />
            </DetailsRow>
            <DetailsRow>
              <DetailsGutter><Expander /></DetailsGutter>
              <DetailsCells><HeadCell>Statistik</HeadCell></DetailsCells>
            </DetailsRow>
            <DetailsRow>
              <DetailsGutter />
              <DetailsCells $bg="#e6e5e2">
                <NameCell>Zugewiesene Körper</NameCell>
                <ValueCell>3</ValueCell>
              </DetailsCells>
            </DetailsRow>
          </DetailsPanel>
        </LeftDock>
        <Workspace>
          <TopToolbar />
          <Viewport>
            <GraphicsScene />
            <Logo>
              <LogoName>ANSYS</LogoName>
              <LogoRelease>2019 <b>R3</b></LogoRelease>
              <LogoEdition>ACADEMIC</LogoEdition>
            </Logo>
          </Viewport>
        </Workspace>
      </Main>
      <StatusBar>
        <StatusItem $ml={0}>Message Pane</StatusItem>
        <StatusItem $ml={18}>Keine Auswahl</StatusItem>
        <StatusItem $ml={18}>Metrisch (mm, kg, N, s, mV, mA)</StatusItem>
        <StatusItem $ml={12}>Grad</StatusItem>
        <StatusItem $ml={12}>rad/s</StatusItem>
        <StatusItem $ml={13}>Celsius</StatusItem>
      </StatusBar>
      <PenLayer width="1943" height="933" viewBox="0 0 1943 933">
        <path d={smooth(LOOP_MODEL)} fill="none" stroke="#d01c30" strokeWidth="2" />
        <path d={smooth(LOOP_DETAILS)} fill="none" stroke="#c8141e" strokeWidth="2" />
      </PenLayer>
    </Page>
  );
}
